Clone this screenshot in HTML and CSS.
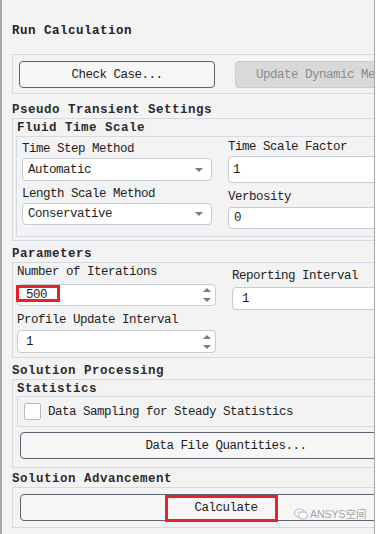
FILE: index.html
```html
<!DOCTYPE html>
<html>
<head>
    <title>Run Calculation</title>
    <link rel="stylesheet" href="styles.css">
</head>
<body>
    <div class="panel">
        <h1 class="title">Run Calculation</h1>

        <!-- Top buttons -->
        <div class="frame btn-row">
            <button class="btn">Check Case...</button>
            <button class="btn" disabled>Update Dynamic Mesh...</button>
        </div>

        <!-- Pseudo Transient Settings -->
        <div class="section-title">Pseudo Transient Settings</div>
        <div class="frame group group-pseudo">
            <div class="sub-title">Fluid Time Scale</div>
            <div class="frame inner fluid">
                <div class="col col-left">
                    <div class="label">Time Step Method</div>
                    <div class="select sel-1"><span class="value">Automatic</span><span class="caret"></span></div>
                    <div class="label label-2">Length Scale Method</div>
                    <div class="select sel-2"><span class="value">Conservative</span><span class="caret"></span></div>
                </div>
                <div class="col col-right">
                    <div class="label">Time Scale Factor</div>
                    <div class="input inp-tsf">1</div>
                    <div class="label label-verb">Verbosity</div>
                    <div class="input inp-verb">0</div>
                </div>
            </div>
        </div>

        <!-- Parameters -->
        <div class="section-title">Parameters</div>
        <div class="frame group params">
            <div class="col col-spin">
                <div class="label">Number of Iterations</div>
                <div class="input spin spin-1">
                    <span class="value">500</span>
                    <span class="spin-arrows"><span class="up"></span><span class="down"></span></span>
                    <span class="mark mark-iter"></span>
                </div>
                <div class="label label-profile">Profile Update Interval</div>
                <div class="input spin spin-2">
                    <span class="value">1</span>
                    <span class="spin-arrows"><span class="up"></span><span class="down"></span></span>
                </div>
            </div>
            <div class="col col-report">
                <div class="label">Reporting Interval</div>
                <div class="input inp-report">1</div>
            </div>
        </div>

        <!-- Solution Processing -->
        <div class="section-title">Solution Processing</div>
        <div class="frame group processing">
            <div class="sub-title">Statistics</div>
            <div class="frame inner stats">
                <span class="checkbox"></span>
                <span>Data Sampling for Steady Statistics</span>
            </div>
            <button class="btn wide btn-data">Data File Quantities...</button>
        </div>

        <!-- Solution Advancement -->
        <div class="section-title adv-title">Solution Advancement</div>
        <div class="frame group advance">
            <button class="btn wide btn-calc">Calculate<span class="mark mark-calc"></span></button>
        </div>

        <div class="watermark">
            <svg width="14" height="12" viewBox="0 0 14 12">
                <ellipse cx="5.5" cy="5" rx="5" ry="4.2" fill="#fff" stroke="#b5b5b5" stroke-width="1"/>
                <ellipse cx="9" cy="7.5" rx="4.3" ry="3.6" fill="#fff" stroke="#b5b5b5" stroke-width="1"/>
                <circle cx="4" cy="4" r="0.8" fill="#aaa"/>
                <circle cx="7" cy="4" r="0.8" fill="#aaa"/>
            </svg>
            <span>ANSYS空间</span>
        </div>
    </div>
</body>
</html>
```

FILE: styles.css
```css
body {
    margin: 0;
    padding: 0;
    background-color: #ffffff;
    font-family: "Liberation Mono", "DejaVu Sans Mono", monospace;
    font-size: 12.5px;
    letter-spacing: -0.5px;
    color: #1e1e1e;
}
.panel {
    position: relative;
    width: 375px;
    height: 534px;
    box-sizing: border-box;
    padding: 23px 0 0 10px;
    background-color: #f3f3f3;
    border-left: 2px solid #a9a9a9;
    border-right: 1px solid #a9a9a9;
    overflow: hidden;
}
.title {
    margin: 0;
    font-size: 12.5px;
    line-height: 16px;
    font-weight: bold;
    letter-spacing: 0.5px;
    color: #222;
}
.section-title,
.sub-title {
    font-weight: bold;
    letter-spacing: 0.5px;
    color: #2b2b2b;
}
.section-title {
    margin-top: 6px;
    line-height: 15px;
}
.adv-title {
    margin-top: 4px;
}
.sub-title {
    line-height: 16px;
    padding-left: 1px;
}
.frame {
    border: 1px solid #d5dae4;
    border-right: none;
    margin-right: -40px;
}
.inner {
    margin-right: -40px;
}
.btn-row {
    margin-top: 15px;
    display: flex;
    gap: 20px;
    padding: 6px 0 5px 6px;
}
.title + .btn-row + .section-title {
    margin-top: 9px;
}
.btn {
    font-family: inherit;
    font-size: inherit;
    letter-spacing: inherit;
    color: #1e1e1e;
    width: 196px;
    height: 27px;
    padding: 0;
    background-color: #f6f6f6;
    border: 1px solid #5d6370;
    border-radius: 4px;
    flex-shrink: 0;
}
.btn:disabled {
    background-color: #d8d9db;
    border-color: #c9cbce;
    color: #8c8c8c;
}
.btn.wide {
    width: 412px;
}

/* Pseudo transient */
.group-pseudo {
    padding: 1px 0 3px 3px;
}
.fluid {
    display: flex;
    align-items: flex-start;
    padding: 0 0 7px 5px;
}
.col {
    display: flex;
    flex-direction: column;
}
.label {
    line-height: 16px;
    white-space: nowrap;
}
.col-left {
    width: 190px;
    padding-top: 4px;
}
.col-right {
    flex: 1;
    margin-left: 16px;
    padding-top: 2px;
}
.select,
.input {
    box-sizing: border-box;
    background-color: #ffffff;
    border: 1px solid #c6cad2;
    border-radius: 4px;
    display: flex;
    align-items: center;
    white-space: nowrap;
}
.select {
    margin-top: 1px;
    padding: 0 8px 0 5px;
}
.select .value {
    flex: 1;
}
.caret {
    width: 0;
    height: 0;
    border-left: 4px solid transparent;
    border-right: 4px solid transparent;
    border-top: 4px solid #7a7a7a;
}
.sel-1 {
    height: 23px;
}
.sel-2 {
    height: 22px;
}
.label-2 {
    margin-top: 5px;
}
.inp-tsf {
    margin-top: 1px;
    height: 27px;
    padding-left: 4px;
}
.label-verb {
    margin-top: 6px;
}
.inp-verb {
    margin-top: 2px;
    height: 22px;
    padding-left: 5px;
}

/* Parameters */
.params {
    display: flex;
    align-items: flex-start;
    padding: 1px 0 4px 4px;
}
.col-spin {
    width: 199px;
}
.spin {
    position: relative;
    padding: 0 4px 0 8px;
}
.spin .value {
    flex: 1;
}
.spin-1 {
    margin-top: 4px;
    height: 22px;
}
.spin-2 {
    margin-top: 2px;
    height: 23px;
}
.label-profile {
    margin-top: 6px;
}
.spin-arrows {
    display: flex;
    flex-direction: column;
    gap: 6px;
}
.spin-arrows .up {
    border-left: 4px solid transparent;
    border-right: 4px solid transparent;
    border-bottom: 4px solid #7a7a7a;
}
.spin-arrows .down {
    border-left: 4px solid transparent;
    border-right: 4px solid transparent;
    border-top: 4px solid #7a7a7a;
}
.col-report {
    flex: 1;
    margin-left: 16px;
    padding-top: 4px;
}
.inp-report {
    margin-top: 3px;
    height: 23px;
    padding-left: 9px;
}

/* Annotation marks */
.mark {
    position: absolute;
    border: 3px solid #e8202a;
    box-sizing: border-box;
}
.mark-iter {
    left: -2px;
    top: 0;
    width: 44px;
    height: 17px;
}
.btn-calc {
    position: relative;
}
.mark-calc {
    left: 144px;
    top: 0;
    width: 113px;
    height: 27px;
}

/* Solution processing */
.processing {
    padding: 2px 0 8px 4px;
}
.processing .sub-title {
    line-height: 14px;
    padding-left: 0;
}
.stats {
    display: flex;
    align-items: center;
    gap: 7px;
    padding: 6px 0 6px 6px;
}
.checkbox {
    width: 17px;
    height: 17px;
    box-sizing: border-box;
    background-color: #ffffff;
    border: 1px solid #b9b9b9;
    border-radius: 2px;
}
.btn-data {
    display: block;
    margin: 5px 0 0 3px;
}
.advance {
    padding: 6px 0 6px 7px;
}

.watermark {
    position: absolute;
    left: 292px;
    top: 506px;
    display: flex;
    align-items: center;
    gap: 2px;
    font-family: "Liberation Sans", "Noto Sans CJK SC", sans-serif;
    font-size: 10.5px;
    letter-spacing: 0;
    color: #a3a3a3;
}
```
